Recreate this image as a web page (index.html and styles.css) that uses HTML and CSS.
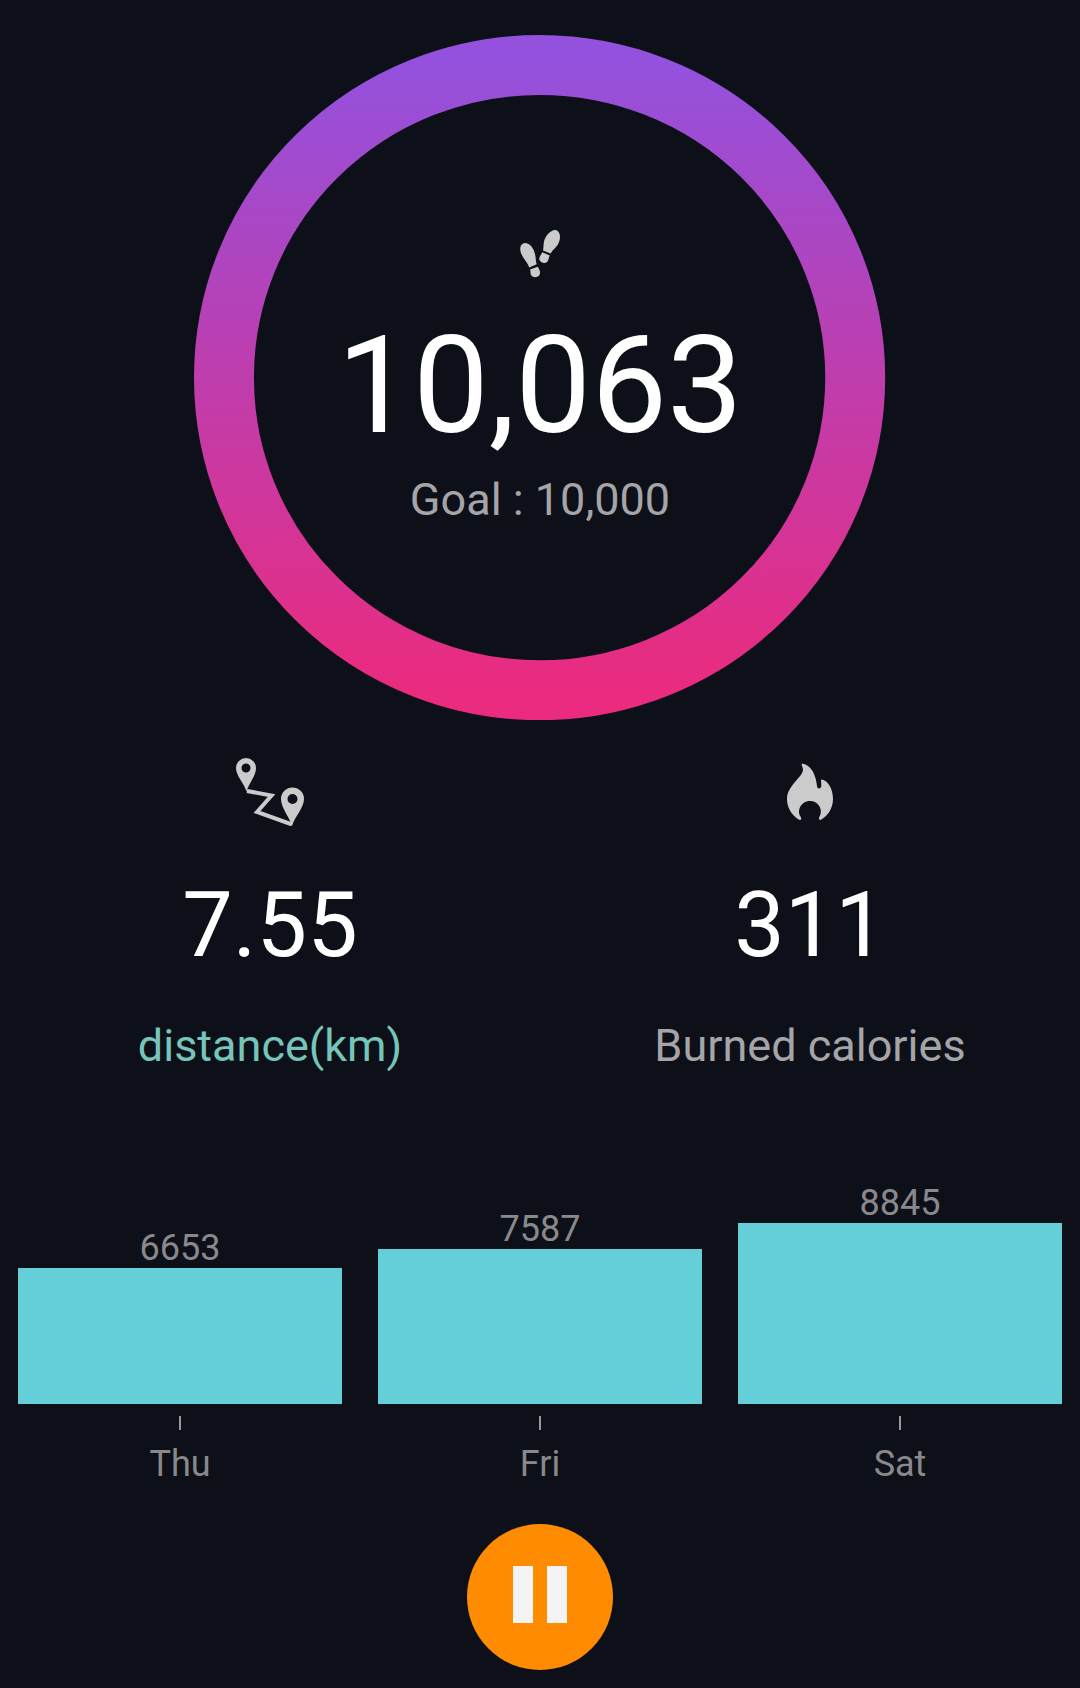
FILE: index.html
```html
<!DOCTYPE html>
<html lang="en">
<head>
<meta charset="utf-8">
<meta name="viewport" content="width=device-width, initial-scale=1">
<title>Step counter</title>
<link rel="stylesheet" href="styles.css">
</head>
<body>
<main class="app">
  <section class="goal" aria-label="Steps today">
    <svg class="goal-ring" viewBox="0 0 692 686" preserveAspectRatio="none" aria-hidden="true">
      <defs>
        <linearGradient id="ring" x1="0" y1="30" x2="0" y2="656" gradientUnits="userSpaceOnUse">
          <stop offset="0" stop-color="#9451dd"/>
          <stop offset="0.5" stop-color="#bf3dad"/>
          <stop offset="1" stop-color="#ea2b7f"/>
        </linearGradient>
      </defs>
      <ellipse cx="346" cy="343" rx="316" ry="313" fill="none" stroke="url(#ring)" stroke-width="60"/>
    </svg>
    <div class="goal-content">
      <svg class="steps-icon" viewBox="0 0 40 48" aria-hidden="true">
        <path d="M5 13C10 13 13.500 18 15 24C16 28 15.500 31 16.700 34.300L9.300 37.500C7.500 32 2.500 28 .8 22.500C-.5 18 .5 13.500 5 13Z"/>
        <path d="M10 39.500L17.700 36.800C20 40 21 43.500 19 45.800C16.500 48 12 47.500 10.800 44.500C10.300 42.500 10.800 41 10 39.500Z"/>
        <path d="M36 0C40 1 41 7 39 12C37 17.500 33 19 30.700 23.500L23 20.500C24 16 23 13 25 8.500C27.500 3.500 32-.5 36 0Z"/>
        <path d="M22.300 22.300L29.800 25.500C28.500 27.500 29 29.500 27.500 31.500C25 34.500 19.500 32.500 19.200 29C19.200 26.500 21.200 24.800 22.300 22.300Z"/>
      </svg>
      <p class="goal-value">10,063</p>
      <p class="label">Goal : 10,000</p>
    </div>
  </section>

  <section class="stats">
    <div class="stat">
      <svg class="stat-icon" viewBox="0 0 70 70" aria-hidden="true">
        <path fill-rule="evenodd" d="M11 2A10 10 0 0 1 21 12C21 20 14 27 11.500 35.500C9 27 1 20 1 12A10 10 0 0 1 11 2ZM11 7.500A4.500 4.500 0 1 0 11 16.500A4.500 4.500 0 1 0 11 7.500Z"/>
        <path fill-rule="evenodd" d="M57.500 31.500A11.500 11.500 0 0 1 69 43C69 52 60 60 57 70C54 60 46 52 46 43A11.500 11.500 0 0 1 57.500 31.500ZM57.500 38A5 5 0 1 0 57.500 48A5 5 0 1 0 57.500 38Z"/>
        <path class="route" d="M12 35L36.500 39.500L22 56L57 68.500"/>
      </svg>
      <p class="stat-value">7.55</p>
      <p class="label label-accent">distance(km)</p>
    </div>
    <div class="stat">
      <svg class="stat-icon" viewBox="0 0 70 70" aria-hidden="true">
        <path d="M27 7.500C37 9 41 20 42 30C42 33.500 46.500 33 46.300 29.500L46 23.500C53 24 58 33 58 43C58 52 53 60 45.500 64C44 64 43.500 62 44.500 60.500C48.500 54 43.500 45 35 45C26.500 45 21.500 54 25.500 60.500C27 63 26 64.500 24.500 64C16 59 12 51 12 43C12 30 27.500 21 28 14C28.200 11 26 10 27 7.500Z"/>
      </svg>
      <p class="stat-value">311</p>
      <p class="label">Burned calories</p>
    </div>
  </section>

  <section class="chart" aria-label="Steps by day">
    <div class="day">
      <span class="chart-text">6653</span>
      <div class="bar" style="height: 136px"></div>
      <div class="tick"></div>
      <span class="chart-text">Thu</span>
    </div>
    <div class="day">
      <span class="chart-text">7587</span>
      <div class="bar" style="height: 155px"></div>
      <div class="tick"></div>
      <span class="chart-text">Fri</span>
    </div>
    <div class="day">
      <span class="chart-text">8845</span>
      <div class="bar" style="height: 181px"></div>
      <div class="tick"></div>
      <span class="chart-text">Sat</span>
    </div>
  </section>

  <button class="pause" type="button" aria-label="Pause">
    <svg class="pause-icon" viewBox="0 0 54 58" aria-hidden="true">
      <path d="M0 0H20V57H0ZM34 0H54V57H34Z"/>
    </svg>
  </button>
</main>
</body>
</html>
```
FILE: styles.css
```css
* {
  box-sizing: border-box;
}

body {
  margin: 0;
  background: #0d1018;
  color: #fff;
  font-family: Roboto, "Liberation Sans", sans-serif;
}

p {
  margin: 0;
}

.app {
  display: flex;
  flex-direction: column;
  align-items: center;
  padding: 35px 0 16px;
}

.goal {
  display: grid;
  width: 64%;
}

.goal-ring,
.goal-content {
  grid-area: 1 / 1;
}

.goal-ring {
  display: block;
  width: 100%;
}

.goal-content {
  display: flex;
  flex-direction: column;
  align-items: center;
  padding-top: 195px;
}

.steps-icon {
  width: 40px;
  height: 48px;
  margin-bottom: 40px;
  fill: #cbcbcb;
}

.goal-value {
  margin-bottom: 20px;
  font-size: 135px;
  line-height: 136px;
}

.label {
  color: #a5a5a8;
  font-size: 45px;
  line-height: 52px;
}

.label-accent {
  color: #75c5bb;
}

.stats {
  display: grid;
  grid-template-columns: 1fr 1fr;
  width: 100%;
  margin-top: 36px;
}

.stat {
  display: flex;
  flex-direction: column;
  align-items: center;
}

.stat-icon {
  width: 70px;
  height: 70px;
  margin-bottom: 54px;
  fill: #cbcbcb;
}

.route {
  fill: none;
  stroke: #cbcbcb;
  stroke-width: 4;
}

.stat-value {
  margin-bottom: 48px;
  font-size: 90px;
  line-height: 92px;
}

.chart {
  display: grid;
  grid-template-columns: repeat(3, 1fr);
  align-items: end;
  gap: 36px;
  width: 100%;
  margin-top: 111px;
  padding: 0 18px;
}

.day {
  display: flex;
  flex-direction: column;
  align-items: center;
}

.chart-text {
  color: #89898c;
  font-size: 36px;
  line-height: 40px;
}

.bar {
  width: 100%;
  background: #64ced9;
}

.tick {
  width: 2px;
  height: 14px;
  margin: 12px 0 14px;
  background: #98989b;
}

.pause {
  display: flex;
  align-items: center;
  justify-content: center;
  width: 146px;
  height: 146px;
  margin-top: 40px;
  padding: 0 0 4px;
  border: 0;
  border-radius: 50%;
  background: #ff8b00;
}

.pause-icon {
  width: 54px;
  height: 58px;
  fill: #f4f4f4;
}
```
